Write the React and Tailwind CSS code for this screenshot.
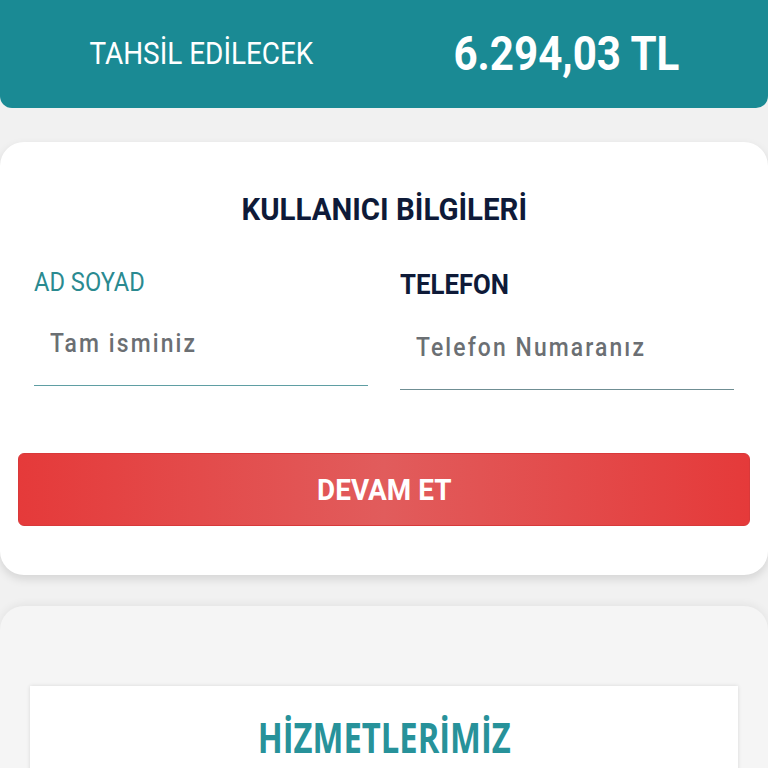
export default function App() {
  return (
    <div className="min-h-[768px] bg-[#f1f1f1] font-['Roboto',sans-serif]">
      {/* amount header */}
      <header className="grid h-[108px] grid-cols-2 items-center rounded-b-[12px] bg-[#1a8a94] px-[19px] text-white">
        <div className="text-center">
          <span className="inline-block scale-x-[0.9] text-[31px] leading-[36px]">
            TAHSİL EDİLECEK
          </span>
        </div>
        <div className="text-center">
          <span className="inline-block scale-x-[0.86] text-[49px] font-bold leading-[56px]">
            6.294,03 TL
          </span>
        </div>
      </header>

      {/* user form */}
      <section className="mt-[34px] rounded-[24px] bg-white pb-[49px] pt-[48px] shadow-[0_4px_10px_rgba(0,0,0,0.12)]">
        <h2 className="text-center text-[#0e1a38]">
          <span className="inline-block scale-x-[0.92] text-[32px] font-bold leading-[38px]">
            KULLANICI BİLGİLERİ
          </span>
        </h2>
        <div className="mt-[38px] grid grid-cols-2 gap-x-[32px] px-[34px]">
          <div>
            <label className="block text-[#2a8a90]" htmlFor="name">
              <span className="inline-block origin-left scale-x-[0.91] text-[26px] leading-[32px]">
                AD SOYAD
              </span>
            </label>
            <div className="flex h-[88px] items-center border-b border-[#5f9ea3] pl-[16px] pt-[4px]">
              <span className="inline-block origin-left scale-x-[0.88] text-[26px] font-medium tracking-[2.4px] text-[#6b6f73]">
                Tam isminiz
              </span>
            </div>
          </div>
          <div className="pt-[2px]">
            <label className="block text-[#0e1a38]" htmlFor="phone">
              <span className="inline-block origin-left scale-x-[0.92] text-[28px] font-bold leading-[34px]">
                TELEFON
              </span>
            </label>
            <div className="flex h-[88px] items-center border-b border-[#6f8e93] pl-[16px] pt-[4px]">
              <span className="inline-block origin-left scale-x-[0.88] text-[26px] font-medium tracking-[2.4px] text-[#6b6f73]">
                Telefon Numaranız
              </span>
            </div>
          </div>
        </div>
        <div className="mt-[63px] px-[18px]">
          <button
            className="flex h-[73px] w-full items-center justify-center rounded-[6px] border border-[#d8393a] bg-[linear-gradient(90deg,#e53a3a_0%,#e15c5c_50%,#e53a3a_100%)] text-white"
            type="button"
          >
            <span className="inline-block scale-x-[0.93] text-[30px] font-bold leading-[36px]">
              DEVAM ET
            </span>
          </button>
        </div>
      </section>

      {/* services */}
      <section className="mt-[31px] rounded-t-[24px] bg-[#f5f5f5] px-[30px] pt-[80px] shadow-[0_-2px_8px_rgba(0,0,0,0.06)]">
        <div className="bg-white pt-[26px] pb-[40px] shadow-[0_0_4px_rgba(0,0,0,0.12)]">
          <h2 className="text-center text-[#27929a]">
            <span className="inline-block scale-x-[0.78] font-['Open_Sans',sans-serif] text-[42px] font-bold leading-[50px]">
              HİZMETLERİMİZ
            </span>
          </h2>
        </div>
      </section>
    </div>
  );
}
